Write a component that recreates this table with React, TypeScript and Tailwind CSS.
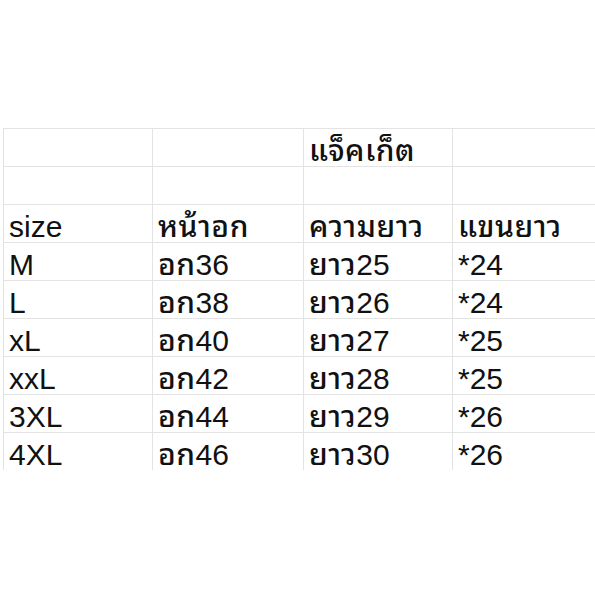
const rows: string[][] = [
  ["", "", "แจ็คเก็ต", ""],
  ["", "", "", ""],
  ["size", "หน้าอก", "ความยาว", "แขนยาว"],
  ["M", "อก36", "ยาว25", "*24"],
  ["L", "อก38", "ยาว26", "*24"],
  ["xL", "อก40", "ยาว27", "*25"],
  ["xxL", "อก42", "ยาว28", "*25"],
  ["3XL", "อก44", "ยาว29", "*26"],
  ["4XL", "อก46", "ยาว30", "*26"],
];

const widths = ["w-[149px]", "w-[151px]", "w-[149px]", "flex-1"];

// thai runs look heavier than the latin ones in the sheet
function Cell({ text }: { text: string }) {
  const parts = text.split(/([\u0E00-\u0E7F]+)/).filter(Boolean);
  return (
    <>
      {parts.map((p, k) =>
        /[\u0E00-\u0E7F]/.test(p) ? (
          <span key={k} className="font-medium tracking-[0.5px]">
            {p}
          </span>
        ) : (
          <span key={k}>{p}</span>
        )
      )}
    </>
  );
}

export default function App() {
  return (
    <div className="h-[595px] w-[595px] overflow-hidden bg-white pt-[128px] pl-[3px] font-['Liberation_Sans','Noto_Sans_Thai_Looped','Noto_Sans_Thai','Noto_Sans',sans-serif] text-[30px] text-[#111]">
      <div className="flex flex-col border-t border-[#e3e3e3]">
        {rows.map((row, i) => (
          <div
            key={i}
            className={
              i < rows.length - 1
                ? "flex h-[38px] border-b border-[#e3e3e3]"
                : "flex h-[37px]"
            }
          >
            {row.map((cell, j) => (
              <div
                key={j}
                className={`${widths[j]} shrink-0 overflow-hidden whitespace-nowrap border-l border-[#e3e3e3] pl-[5px] pt-[6px] leading-[32px]`}
              >
                <Cell text={cell} />
              </div>
            ))}
          </div>
        ))}
      </div>
    </div>
  );
}
